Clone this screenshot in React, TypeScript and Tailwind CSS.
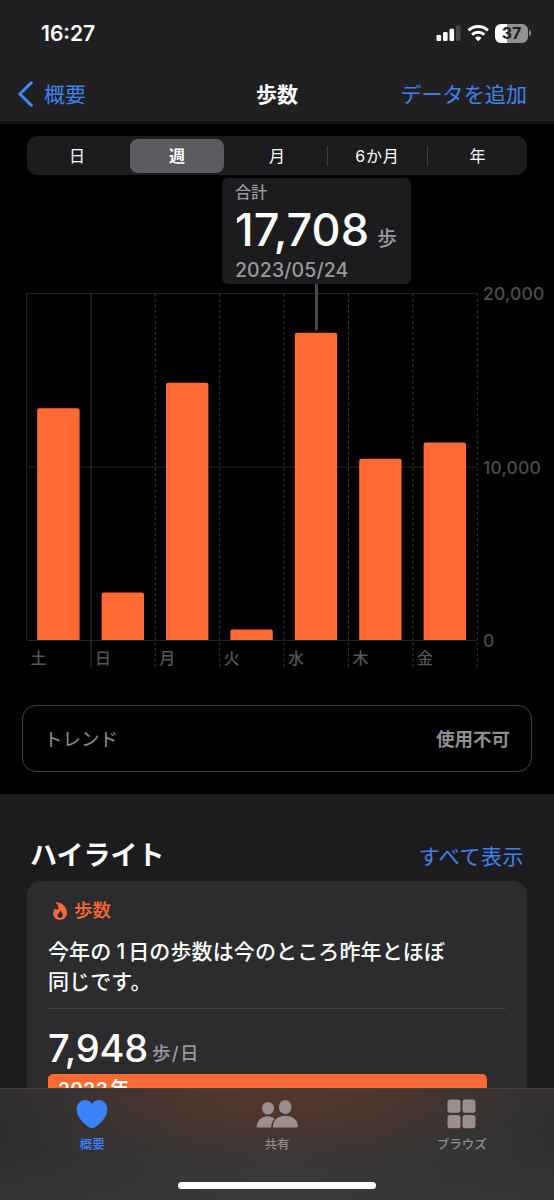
import { useState } from 'react';
import clsx from 'clsx';

type DayEntry = { label: string; steps: number };

const RANGES = ['日', '週', '月', '6か月', '年'];

const WEEK: DayEntry[] = [
  { label: '土', steps: 13360 },
  { label: '日', steps: 2740 },
  { label: '月', steps: 14820 },
  { label: '火', steps: 610 },
  { label: '水', steps: 17708 },
  { label: '木', steps: 10450 },
  { label: '金', steps: 11390 },
];

const MAX_STEPS = 20000;
const PLOT = { left: 26.5, top: 9.5, height: 347, step: 64.4 };

function StatusBar() {
  return (
    <div className="flex h-[66px] items-center justify-between pl-[41px] pr-[23px]">
      <span className="text-[21px] font-semibold leading-none">16:27</span>
      <div className="flex items-center gap-[6px]">
        <svg width="26" height="18" viewBox="0 0 26 18" fill="#fff">
          <rect x="1.5" y="11" width="4.6" height="6" rx="1.2" />
          <rect x="8" y="8" width="4.6" height="9" rx="1.2" />
          <rect x="14.5" y="4.7" width="4.6" height="12.3" rx="1.2" />
          <rect x="21" y="1.5" width="4.6" height="15.5" rx="1.2" fill="#48484a" />
        </svg>
        <svg width="22" height="18" viewBox="0 0 22 18" fill="none" stroke="#fff" strokeWidth="3">
          <path d="M1.5 6.4a14 14 0 0 1 19.4 0" />
          <path d="M5.1 10.6a8.8 8.8 0 0 1 12.2 0" />
          <path d="M11.2 17.2l-3.2-3.3a4.5 4.5 0 0 1 6.4 0z" fill="#fff" stroke="none" />
        </svg>
        <div className="flex items-center gap-px">
          <div className="flex h-[19px] w-[33px] items-center justify-center rounded-[6px] bg-linear-to-r from-white from-37% to-[#929294] to-37%">
            <span className="text-[16px] font-bold leading-none text-[#1f1f21]">37</span>
          </div>
          <div className="h-[6px] w-[2px] rounded-r-full bg-[#858587]" />
        </div>
      </div>
    </div>
  );
}

function NavBar() {
  return (
    <div className="grid h-[56px] grid-cols-3 items-center pl-[18px] pr-[27px] text-[21px] leading-none">
      <button className="flex items-center gap-[11px] text-[#3f83f0]">
        <svg width="15" height="26" viewBox="0 0 15 26" fill="none" stroke="#3f8cff" strokeWidth="3" strokeLinecap="round" strokeLinejoin="round">
          <path d="M13.3 1.8L1.8 13l11.5 11.2" />
        </svg>
        概要
      </button>
      <h1 className="pl-[9px] text-center font-bold">歩数</h1>
      <button className="justify-self-end whitespace-nowrap tracking-[0.1px] text-[#3f83f0]">データを追加</button>
    </div>
  );
}

function StepsChart() {
  const right = PLOT.left + PLOT.step * 7;
  const bottom = PLOT.top + PLOT.height;
  return (
    <svg className="block" width="554" height="396" viewBox="0 0 554 396">
      {[0, 10000, 20000].map(v => {
        const y = bottom - (v / MAX_STEPS) * PLOT.height;
        return (
          <g key={v}>
            <line x1={PLOT.left} x2={right} y1={y} y2={y} stroke="#232325" />
            <text x="483" y={y + 6.5} fontSize="17.5" fontWeight="500" letterSpacing="0.2" fill="#4c4c50">
              {v.toLocaleString('en-US')}
            </text>
          </g>
        );
      })}
      <line x1={PLOT.left} x2={PLOT.left} y1={PLOT.top} y2={bottom} stroke="#232325" />
      <line x1="91" x2="91" y1={PLOT.top} y2="384" stroke="#38383a" />
      {[2, 3, 4, 5, 6, 7].map(i => (
        <line
          key={i}
          x1={PLOT.left + PLOT.step * i}
          x2={PLOT.left + PLOT.step * i}
          y1={PLOT.top}
          y2="384"
          stroke="#38383a"
          strokeDasharray="3 2.45"
        />
      ))}
      <line x1="316.5" x2="316.5" y1="0" y2="46.5" stroke="#48484a" strokeWidth="3" />
      {WEEK.map((d, i) => {
        const x = 37.2 + PLOT.step * i;
        const h = (d.steps / MAX_STEPS) * PLOT.height;
        const y = bottom - h - 0.5;
        return (
          <g key={d.label}>
            <path
              d={`M${x} ${bottom - 0.5}V${y + 2}q0-2 2-2h38.4q2 0 2 2V${bottom - 0.5}z`}
              fill="#ff6934"
            />
            <text x={30.5 + PLOT.step * i} y="379.5" fontSize="16" fontWeight="500" fill="#55555a">
              {d.label}
            </text>
          </g>
        );
      })}
    </svg>
  );
}

function TabItem({ label, active, children }: { label: string; active?: boolean; children: React.ReactNode }) {
  return (
    <button className={clsx('flex flex-1 flex-col items-center gap-[7px]', active ? 'text-[#3b82f6]' : 'text-[#9a8f8b]')}>
      <span className="flex h-[30px] items-center justify-center">{children}</span>
      <span className={clsx('text-[12.5px] font-medium leading-[18px]', !active && 'text-[#8e8d8f]')}>{label}</span>
    </button>
  );
}

export default function App() {
  const [range, setRange] = useState('週');

  return (
    <div className="relative h-[1200px] w-[554px] overflow-hidden bg-black font-[Inter,'Noto_Sans_CJK_JP',sans-serif] text-white">
      <header className="h-[124px] border-b-[3px] border-[#111112] bg-[#202022]">
        <StatusBar />
        <NavBar />
      </header>

      {/* Range picker */}
      <div className="mx-[27px] mt-[12px] grid h-[39px] grid-cols-5 items-center rounded-[11px] bg-[#1c1c1f]">
        {RANGES.map((r, i) => (
          <button
            key={r}
            onClick={() => setRange(r)}
            className={clsx(
              'flex items-center justify-center',
              i > 2 ? 'h-[20px] border-l border-[#3f3f43]' : 'h-full'
            )}
          >
            <span
              className={clsx(
                'flex h-[34px] w-[94px] items-center justify-center rounded-[8px] text-[16px] leading-none',
                range === r ? 'bg-[#5b5b60] font-bold' : 'font-normal',
                r.length > 1 && 'tracking-[0.8px]'
              )}
            >
              {r}
            </span>
          </button>
        ))}
      </div>

      {/* Selected day */}
      <div className="ml-[222px] mt-[3px] h-[106px] w-[189px] rounded-[6px] bg-[#1c1c1e] pl-[13px] text-[#98989e]">
        <p className="pt-[4px] text-[16px] font-medium leading-[20px]">合計</p>
        <p className="flex h-[55px] items-baseline gap-[8px] whitespace-nowrap pt-px">
          <span className="text-[45px] font-medium leading-[54px] text-white">17,708</span>
          <span className="text-[20px] font-medium leading-none">歩</span>
        </p>
        <p className="text-[19.5px] font-medium leading-[26px] tracking-[0.1px]">2023/05/24</p>
      </div>

      <StepsChart />

      <div className="mx-[22px] mt-[25px] flex h-[67px] items-center justify-between rounded-[14px] border border-[#414144] px-[21px] pt-[2px] text-[#8e8e93]">
        <span className="text-[18.5px]">トレンド</span>
        <span className="text-[18.5px] font-bold">使用不可</span>
      </div>

      {/* Highlights */}
      <section className="mt-[22px] h-[406px] bg-[#1c1c1e] px-[27px]">
        <div className="flex h-[87px] items-end justify-between pb-[10px] pl-[3px] pr-[3px]">
          <h2 className="text-[27px] font-bold leading-[31px]">ハイライト</h2>
          <button className="text-[21px] leading-[28px] tracking-[0.5px] text-[#3f83f0]">すべて表示</button>
        </div>
        <div className="h-[400px] rounded-t-[14px] bg-[#2c2c2e] px-[21px] pt-[17px]">
          <div className="flex h-[25px] items-center gap-[7px] pl-[5px] text-[#ff6934]">
            <svg width="14" height="18" viewBox="0 0 14 18" fill="currentColor">
              <path fillRule="evenodd" d="M3.2.2C8 .2 13.9 4 13.9 10.8c0 4.2-2.8 7-6.9 7-4.1 0-6.8-2.6-6.8-6.5 0-2.5 1.2-4.6 2.2-4.6.6 0 .7.9 1.5 1 1.1.1 1.7-.9 1.5-2.5C5.2 3.7 4.3 2.1 3 1c-.4-.4-.3-.8.2-.8zM7.3 8.2c.5 1.9-2.7 3-2.7 5.3 0 1.5 1 2.4 2.5 2.4s2.6-1 2.6-2.6c0-2-1-4-2.4-5.1z" />
            </svg>
            <span className="text-[18.5px] font-medium leading-none">歩数</span>
          </div>
          <p className="mt-[14px] whitespace-nowrap text-[21px] font-medium leading-[30px] tracking-[0.12px]">
            今年の<span className="ml-[5px] mr-[3px]">1</span>日の歩数は今のところ昨年とほぼ
            <br />
            同じです。
          </p>
          <div className="mt-[11px] border-t border-[#414144]" />
          <p className="flex h-[65px] items-end gap-[4px] whitespace-nowrap pb-px">
            <span className="text-[38px] font-medium leading-[50px] tracking-[-0.2px]">7,948</span>
            <span className="pb-[11px] text-[18.5px] font-medium leading-none tracking-[1.4px] text-[#98989e]">歩/日</span>
          </p>
          <div className="flex h-[48px] w-[439px] gap-[2px] rounded-[5px] bg-[#ff6934] px-[10px] pt-[5px] text-[19px] font-semibold leading-[22px]">
            <span className="tracking-[0.5px]">2023</span>
            <span>年</span>
          </div>
        </div>
      </section>

      <nav className="absolute inset-x-0 bottom-0 h-[112px] border-t border-[#4a403c] bg-linear-to-r from-[#2c2c2d] via-[#363638] to-[#2e2e30]">
        <div className="h-full bg-linear-to-b from-transparent from-30% to-[#3c3c3f]/50">
          <div className="h-full bg-[radial-gradient(ellipse_330px_100px_at_51%_0%,#55372b_0%,#4d362dcc_40%,#40363366_70%,transparent_100%)]">
            <div className="flex pt-[10px]">
              <TabItem label="概要" active>
                <svg width="32" height="30" viewBox="0 0 32 30" fill="currentColor">
                  <path d="M16 29.5C14 29.5.7 21 .7 10.3.7 4.8 4.3 1 9 1c3.1 0 5.6 1.6 7 4 1.4-2.4 3.9-4 7-4 4.7 0 8.3 3.8 8.3 9.3C31.3 21 18 29.5 16 29.5z" />
                </svg>
              </TabItem>
              <TabItem label="共有">
                <svg width="43" height="30" viewBox="0 0 43 30" fill="currentColor">
                  <ellipse cx="12" cy="9.2" rx="5.9" ry="6.3" />
                  <path d="M.7 28.5C.4 22.5 5 17.3 11.5 17.3c3 0 5.3 1 7.2 2.7-2.4 2-3.6 5-3.5 8.5H2c-.8 0-1.2 0-1.3 0z" />
                  <ellipse cx="29.2" cy="8" rx="6.3" ry="6.9" />
                  <path d="M17 28.5c-1-6 4.5-11.7 12.2-11.7 7.5 0 12.6 4.6 12.8 10 0 1.2-.6 1.7-1.5 1.7z" />
                </svg>
              </TabItem>
              <TabItem label="ブラウズ">
                <svg width="30" height="30" viewBox="0 0 30 30" fill="currentColor">
                  <rect x="0.5" y="0.5" width="13" height="13.2" rx="2.8" />
                  <rect x="15.5" y="0.5" width="13" height="13.2" rx="2.8" />
                  <rect x="0.5" y="16" width="13" height="13.2" rx="2.8" />
                  <rect x="15.5" y="16" width="13" height="13.2" rx="2.8" />
                </svg>
              </TabItem>
            </div>
            <div className="mx-auto mt-[28px] h-[7px] w-[198px] rounded-full bg-white" />
          </div>
        </div>
      </nav>
    </div>
  );
}
